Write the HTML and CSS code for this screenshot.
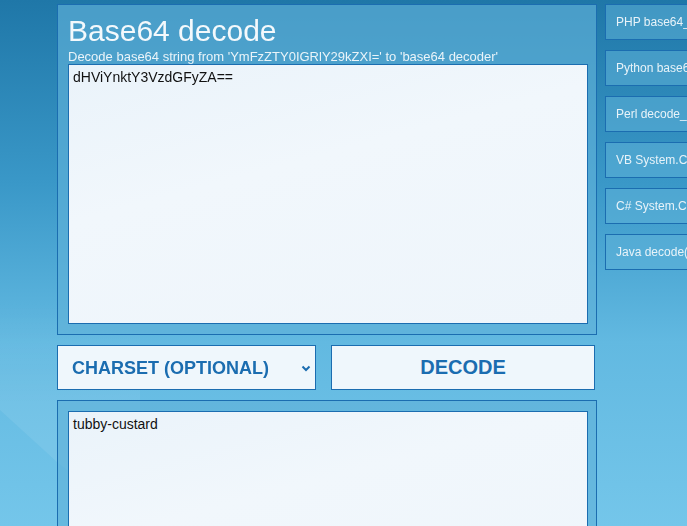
FILE: index.html
```html
<!DOCTYPE html>
<html>
<head>
<meta charset="utf-8">
<title>Base64 decode</title>
<link rel="stylesheet" href="styles.css">
</head>
<body>
<div class="page">
  <main class="main">
    <section class="panel">
      <h1 class="title">Base64 decode</h1>
      <p class="subtitle">Decode base64 string from 'YmFzZTY0IGRlY29kZXI=' to 'base64 decoder'</p>
      <textarea class="box box-in">dHViYnktY3VzdGFyZA==</textarea>
    </section>
    <div class="controls">
      <div class="select-wrap">
        <select class="charset"><option>CHARSET (OPTIONAL)</option></select>
        <svg class="chev" width="10" height="7" viewBox="0 0 10 7"><path d="M1.5 1.5 L5 5 L8.5 1.5" fill="none" stroke="#1b6db0" stroke-width="2"/></svg>
      </div>
      <button class="decode">DECODE</button>
    </div>
    <section class="panel panel-out">
      <textarea class="box box-out">tubby-custard</textarea>
    </section>
  </main>
  <aside class="side">
    <a class="side-btn">PHP base64_decode</a>
    <a class="side-btn">Python base64.b64decode</a>
    <a class="side-btn">Perl decode_base64</a>
    <a class="side-btn">VB System.Convert</a>
    <a class="side-btn">C# System.Convert</a>
    <a class="side-btn">Java decode()</a>
  </aside>
</div>
</body>
</html>
```
FILE: styles.css
```css
html {
  overflow: hidden;
  height: 100%;
}
body {
  margin: 0;
  min-height: 100%;
  font-family: "Liberation Sans", Arial, sans-serif;
  background: linear-gradient(180deg, #1f77a8 0%, #3a98c8 35%, #62b9e1 65%, #74c6ea 100%);
  background-attachment: fixed;
}
body::before {
  content: "";
  position: fixed;
  left: 0;
  top: 300px;
  width: 140px;
  height: 226px;
  background: linear-gradient(180deg, rgba(255,255,255,0) 0%, rgba(255,255,255,0.08) 45%, rgba(255,255,255,0.08) 100%);
  clip-path: polygon(0 0, 100% 0, 100% 100%, 57px 162px, 0 110px);
  pointer-events: none;
}
.page {
  position: relative;
  display: flex;
  gap: 8px;
  padding: 4px 0 0 57px;
  width: 900px;
}
.main {
  width: 540px;
  flex: none;
  display: flex;
  flex-direction: column;
}
.panel {
  border: 1px solid #1b6db0;
  background: rgba(95, 178, 217, 0.66);
  padding: 0 9px 10px 10px;
  display: flex;
  flex-direction: column;
}
.title {
  margin: 8px 0 0;
  font-weight: normal;
  font-size: 30px;
  line-height: 36px;
  color: #f4f9fc;
}
.subtitle {
  margin: 0;
  font-size: 13px;
  line-height: 15px;
  color: #eaf4f9;
}
.box {
  display: block;
  box-sizing: border-box;
  width: 520px;
  border: 1px solid #1b6db0;
  background: linear-gradient(165deg, #eaf3fa 0%, #f1f7fc 40%, #eef5fb 100%);
  font-family: "Liberation Sans", Arial, sans-serif;
  font-size: 14px;
  line-height: 17px;
  color: #111;
  padding: 4px 4px 3px;
  resize: none;
  margin: 0;
  outline: none;
}
.box-in {
  height: 260px;
}
.panel-out {
  padding-top: 10px;
}
.box-out {
  height: 200px;
}
.controls {
  display: flex;
  gap: 15px;
  margin: 10px 0 10px;
}
.select-wrap {
  position: relative;
  width: 259px;
  height: 45px;
}
.charset {
  appearance: none;
  -webkit-appearance: none;
  width: 100%;
  height: 100%;
  margin: 0;
  border: 1px solid #1b6db0;
  border-radius: 0;
  background: #eff7fc;
  color: #1b6db0;
  font-family: "Liberation Sans", Arial, sans-serif;
  font-weight: bold;
  font-size: 18px;
  padding: 0 0 0 14px;
  outline: none;
}
.chev {
  position: absolute;
  right: 5px;
  top: 20px;
}
.decode {
  width: 264px;
  height: 45px;
  margin: 0;
  border: 1px solid #1b6db0;
  border-radius: 0;
  background: #eff7fc;
  color: #1b6db0;
  font-family: "Liberation Sans", Arial, sans-serif;
  font-weight: bold;
  font-size: 20px;
  padding: 0;
}
.side {
  display: flex;
  flex-direction: column;
  gap: 10px;
  width: 200px;
  flex: none;
}
.side-btn {
  display: block;
  box-sizing: border-box;
  height: 36px;
  border: 1px solid #1b6db0;
  background: rgba(95, 178, 217, 0.55);
  color: #e8f3f9;
  font-size: 12px;
  line-height: 34px;
  padding: 0 10px;
  white-space: nowrap;
}
```
